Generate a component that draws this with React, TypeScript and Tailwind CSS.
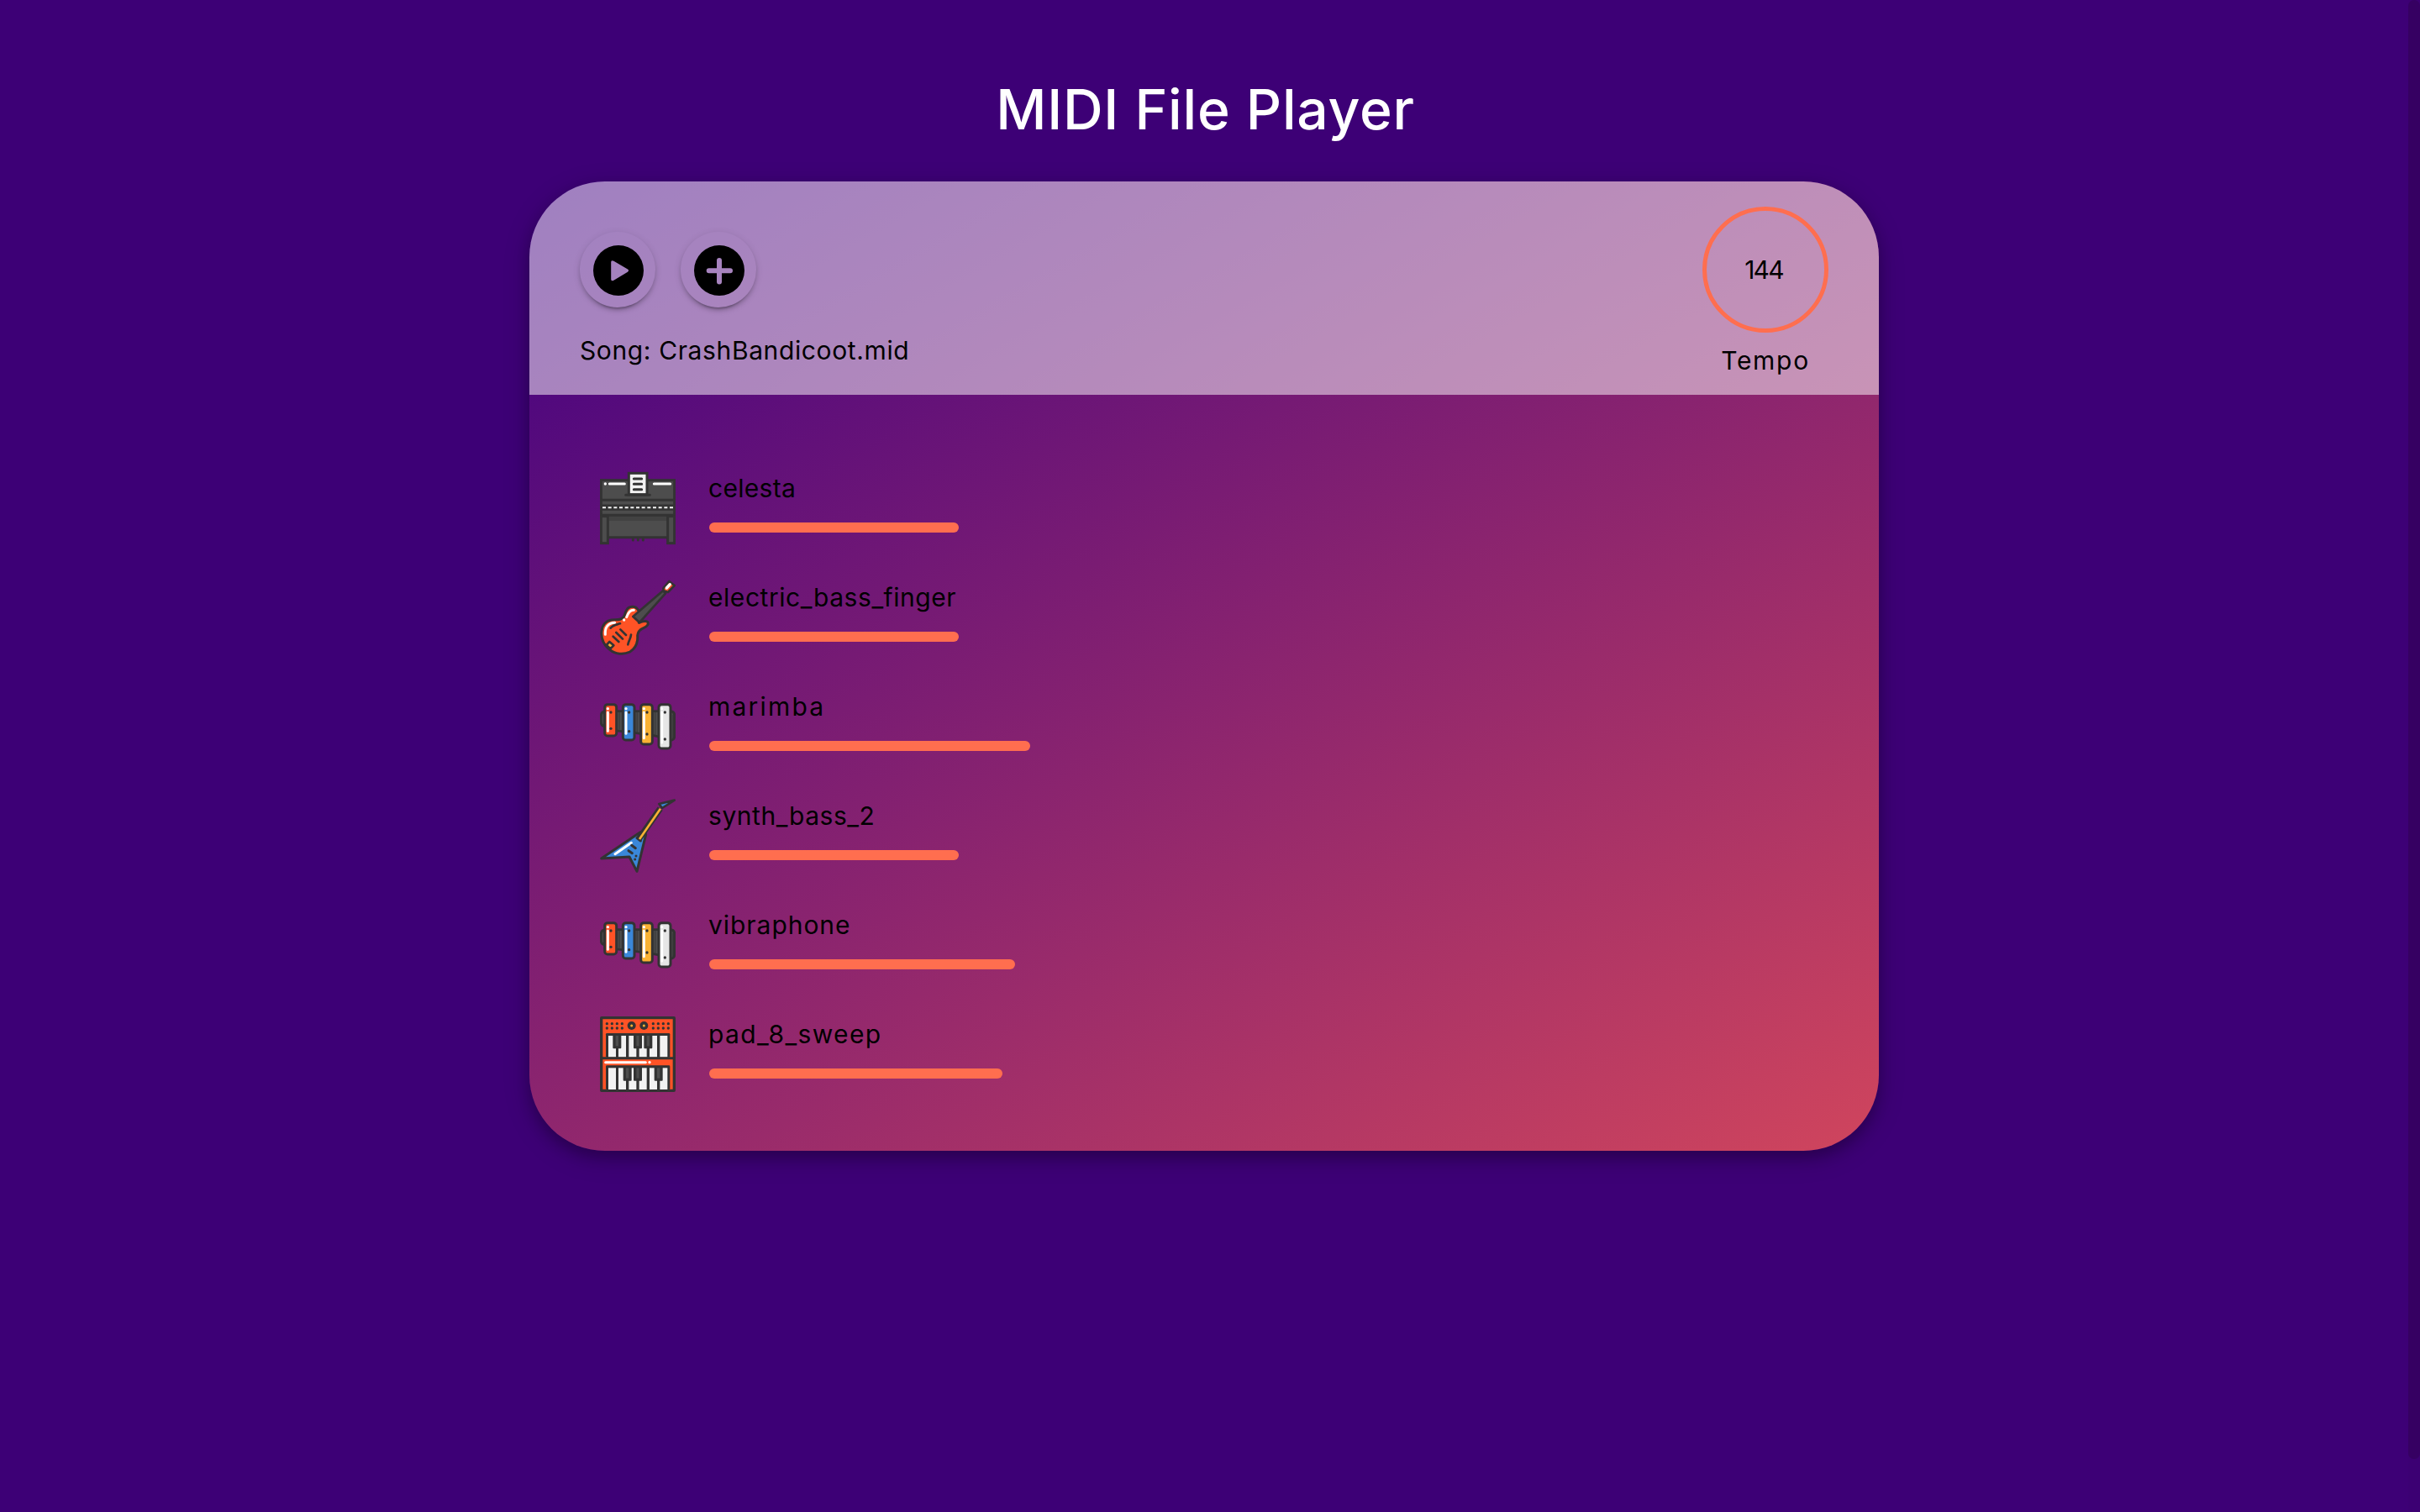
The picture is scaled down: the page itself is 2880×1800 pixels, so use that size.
import React from "react";

const DARK = "#333333";

function Piano() {
  return (
    <svg viewBox="42 30 270 270" className="size-[90px] shrink-0">
      <rect x="46" y="65" width="262" height="129" fill="#4d4d4d" stroke={DARK} strokeWidth="9" />
      <rect x="70" y="194" width="212" height="78" fill="#4d4d4d" />
      <rect x="70" y="194" width="212" height="16" fill="#424242" />
      <path d="M46 136H308M46 190H308M70 269H284" stroke={DARK} strokeWidth="9" />
      <path d="M50 154H304M50 171H304" stroke={DARK} strokeWidth="5" />
      <rect x="50" y="155" width="254" height="16" fill={DARK} />
      <path d="M51 163H304" stroke="#f2f2f2" strokeWidth="6" strokeDasharray="12 8" />
      <rect x="46" y="194" width="24" height="96" fill="#4d4d4d" stroke={DARK} strokeWidth="9" />
      <rect x="284" y="194" width="24" height="96" fill="#4d4d4d" stroke={DARK} strokeWidth="9" />
      <path d="M160 275v4M178 275v4M196 275v4" stroke={DARK} strokeWidth="9" strokeLinecap="round" />
      <path d="M76 78H130M235 78H293" stroke="#fff" strokeWidth="9" strokeLinecap="round" />
      <circle cx="61" cy="78" r="5" fill="#fff" />
      <rect x="145" y="40" width="65" height="76" fill="#f2f2f2" stroke={DARK} strokeWidth="9" />
      <path d="M163 60H191M163 79H191M163 98H191M134 118H220" stroke={DARK} strokeWidth="9" strokeLinecap="round" />
    </svg>
  );
}

function BassGuitar() {
  return (
    <svg viewBox="42 30 270 270" className="size-[90px] shrink-0" strokeLinecap="round" strokeLinejoin="round">
      <path
        d="M137 139C145 124 168 122 178 138L186 148L181 184C190 181 202 176 211 180C218 188 211 197 199 202C184 208 177 216 176 230C178 257 168 276 149 288C126 299 97 297 77 280C54 262 45 239 48 214C50 192 64 177 84 174C101 172 119 176 127 163C131 156 132 148 137 139Z"
        fill="#ff5326" stroke={DARK} strokeWidth="9"
      />
      <path d="M160 162L267 70L276 79L183 183Z" fill="#4d4d4d" stroke={DARK} strokeWidth="8" />
      <path d="M268 61L289 36L308 51L285 75L269 70Z" fill="#ff5326" stroke={DARK} strokeWidth="8" />
      <path d="M280 60L292 47" stroke="#fff" strokeWidth="10" />
      <path d="M61 226C59 203 70 184 95 184M137 164C143 148 149 138 163 139" fill="none" stroke="#fff" strokeWidth="9" />
      <circle cx="128" cy="174" r="5" fill="#fff" />
      <path d="M80 203C90 191 101 191 114 187M89 233L109 252M100 219L123 242M115 208L135 228M153 227C151 243 145 246 142 262" fill="none" stroke={DARK} strokeWidth="8" />
      <path d="M65 264L76 252L91 265L79 277Z" fill="#f9b233" stroke={DARK} strokeWidth="8" />
    </svg>
  );
}

const bars = [
  { x: 59, w: 42, b: 168, hole: 142, shine: 151, fill: "#ff5326" },
  { x: 124, w: 41, b: 183, hole: 152, shine: 160, fill: "#3a87d9" },
  { x: 188, w: 41, b: 198, hole: 162, shine: 176, fill: "#f9b233" },
  { x: 252, w: 42, b: 213, hole: 180, shine: 192, fill: "#e6e6e6" },
];

function Marimba() {
  return (
    <svg viewBox="42 0 270 270" className="size-[90px] shrink-0">
      <path d="M60 82Q46 82 46 96V119Q46 132 60 134Z" fill="#4d4d4d" stroke={DARK} strokeWidth="9" />
      <path d="M60 80H294V180L230 166L165 157L60 145Z" fill="#4d4d4d" stroke={DARK} strokeWidth="8" />
      <path d="M290 80Q308 80 308 94V170Q308 184 290 184Z" fill="#4d4d4d" stroke={DARK} strokeWidth="9" />
      <path d="M111 82V146M175 82V158M239 82V168M302 92V176" stroke={DARK} strokeWidth="5" opacity=".55" />
      {bars.map((k) => (
        <g key={k.x}>
          <rect x={k.x} y="56" width={k.w} height={k.b - 56} rx="10" fill={k.fill} stroke={DARK} strokeWidth="9" />
          <circle cx={k.x + 11} cy="71" r="5" fill="#fff" />
          <path d={`M${k.x + 11} 84V${k.shine}`} stroke="#fff" strokeWidth="9" strokeLinecap="round" />
          <circle cx={k.x + 22} cy="84" r="5" fill={DARK} />
          <circle cx={k.x + 22} cy={k.hole} r="5" fill={DARK} />
        </g>
      ))}
    </svg>
  );
}

function FlyingV() {
  return (
    <svg viewBox="42 30 270 270" className="size-[90px] shrink-0" strokeLinecap="round" strokeLinejoin="round">
      <path d="M47 246L186 152L206 160L174 292L147 240Z" fill="#3a87d9" stroke={DARK} strokeWidth="9" />
      <path d="M181 176L257 68" stroke={DARK} strokeWidth="22" strokeLinecap="butt" />
      <path d="M174 173L187 183" stroke={DARK} strokeWidth="9" />
      <path d="M183 177L258 68" stroke="#f9b233" strokeWidth="8" strokeLinecap="butt" />
      <path d="M253 51L308 38L264 66Z" fill="#3a87d9" stroke={DARK} strokeWidth="8" />
      <path d="M96 230L154 190" stroke="#fff" strokeWidth="9" />
      <path d="M155 199L169 209M144 218L157 227" stroke={DARK} strokeWidth="9" />
      <circle cx="171" cy="237" r="4.5" fill={DARK} />
      <circle cx="167" cy="249" r="4.5" fill={DARK} />
    </svg>
  );
}

function Keys({ y, b, black }: { y: number; b: number; black: number[] }) {
  return (
    <g>
      <rect x="63" y={y} width="229" height={b - y} rx="4" fill={DARK} />
      {[72, 108, 145, 182, 219, 256].map((x) => (
        <rect key={x} x={x} y={y + 9} width="27" height={b - y - 9} fill="#f2f2f2" />
      ))}
      {black.map((x) => (
        <g key={x}>
          <rect x={x - 15} y={y + 5} width="30" height="50" rx="3" fill={DARK} />
          <rect x={x - 5} y={y + 9} width="10" height="37" fill="#4d4d4d" />
        </g>
      ))}
    </g>
  );
}

function Synth() {
  return (
    <svg viewBox="42 30 270 270" className="size-[90px] shrink-0">
      <rect x="47" y="35" width="260" height="260" rx="1" fill="#ff5326" stroke={DARK} strokeWidth="10" />
      {[67, 85, 103, 121, 232, 250, 268, 286].map((x) => (
        <g key={x} fill={DARK}>
          <circle cx={x} cy="56" r="5" />
          <circle cx={x} cy="72" r="5" />
        </g>
      ))}
      <circle cx="155" cy="63" r="15" fill={DARK} />
      <circle cx="199" cy="63" r="15" fill={DARK} />
      <circle cx="155" cy="63" r="4.5" fill="#f9b233" />
      <circle cx="199" cy="63" r="4.5" fill="#f9b233" />
      <Keys y={90} b={176} black={[103, 177, 214]} />
      <path d="M46 179H308" stroke={DARK} strokeWidth="9" />
      <path d="M62 194H205" stroke="#fff" strokeWidth="9" strokeLinecap="round" />
      <circle cx="219" cy="194" r="5" fill="#fff" />
      <Keys y={205} b={291} black={[140, 177, 251]} />
    </svg>
  );
}

const tracks = [
  { name: "celesta", Icon: Piano, bar: "w-[297px]", text: "tracking-[0.3px]" },
  { name: "electric_bass_finger", Icon: BassGuitar, bar: "w-[297px]", text: "tracking-[0.55px]" },
  { name: "marimba", Icon: Marimba, bar: "w-[382px]", text: "tracking-[2.2px]" },
  { name: "synth_bass_2", Icon: FlyingV, bar: "w-[297px]", text: "tracking-[0.55px]" },
  { name: "vibraphone", Icon: Marimba, bar: "w-[364px]", text: "tracking-[0.95px]" },
  { name: "pad_8_sweep", Icon: Synth, bar: "w-[349px]", text: "tracking-[1.35px]" },
];

function RoundButton({ label, children }: { label: string; children: React.ReactNode }) {
  return (
    <button
      aria-label={label}
      className="flex size-[90px] items-center justify-center rounded-full pl-0.5 pt-0.5 shadow-[0_6px_2px_-4px_rgba(0,0,0,0.2),0_4px_4px_rgba(0,0,0,0.14),0_2px_10px_rgba(0,0,0,0.12)]"
    >
      {children}
    </button>
  );
}

export default function App() {
  return (
    <div className="flex h-[1800px] w-[2880px] overflow-hidden bg-[#3d0076] font-['Inter',sans-serif] text-[30px] leading-[36px] text-black">
      <main className="flex flex-1 flex-col items-center">
        <h1 className="mt-[90px] h-[126px] whitespace-nowrap pl-[3px] text-[66px] font-medium leading-[80px] tracking-[0.76px] text-white">MIDI File Player</h1>
        <section className="flex h-[1154px] w-[1606px] flex-col overflow-hidden rounded-[90px] bg-[linear-gradient(150deg,#3f0082,#d0455d)] shadow-[0_8px_16px_rgba(0,0,0,0.2),0_8px_32px_rgba(0,0,0,0.19)]">
          <header className="flex h-[254px] shrink-0 justify-between bg-white/50 px-[60px]">
            <div className="flex flex-col pt-[60px]">
              <div className="flex gap-[30px]">
                <RoundButton label="Play">
                  <svg viewBox="0 0 60 60" className="size-[60px]">
                    <path
                      fillRule="evenodd"
                      d="M30 0A30 30 0 1 0 30 60A30 30 0 1 0 30 0ZM24.4 18.7L41 28.4Q43.200 30 41 31.700L24.400 41.700Q21.200 43.200 21.200 40.500V20Q21.200 17.200 24.400 18.700Z"
                    />
                  </svg>
                </RoundButton>
                <RoundButton label="Add">
                  <svg viewBox="0 0 60 60" className="size-[60px]">
                    <path
                      fillRule="evenodd"
                      d="M30 0A30 30 0 1 0 30 60A30 30 0 1 0 30 0ZM27 18A3 3 0 0 1 33 18V27.300H43A3 3 0 0 1 43 33.300H33V43.500A3 3 0 0 1 27 43.500V33.300H17.700A3 3 0 0 1 17.700 27.300H27Z"
                    />
                  </svg>
                </RoundButton>
              </div>
              <p className="mt-[33px] whitespace-nowrap tracking-[0.62px]">Song: CrashBandicoot.mid</p>
            </div>
            <div className="flex w-[150px] flex-col items-center pt-[30px]">
              <div className="flex size-[150px] items-center justify-center rounded-full border-[5px] border-[#ff6e4f] pr-1 tracking-[-1.8px]">144</div>
              <p className="mt-[15px] tracking-[1.7px]">Tempo</p>
            </div>
          </header>
          <ul className="flex flex-col gap-10 pl-[84px] pt-[90px]">
            {tracks.map(({ name, Icon, bar, text }) => (
              <li key={name} className="flex h-[90px] gap-10">
                <Icon />
                <div className="flex flex-col">
                  <span className={`-ml-px mt-[3px] whitespace-nowrap ${text}`}>{name}</span>
                  <div className={`mt-[23px] h-3 rounded-full bg-[#ff6e4f] ${bar}`} />
                </div>
              </li>
            ))}
          </ul>
        </section>
      </main>
      <div className="w-[14px] bg-[#3c0073]">
        <div className="h-[1737px] rounded-full bg-[#360062]" />
      </div>
    </div>
  );
}
